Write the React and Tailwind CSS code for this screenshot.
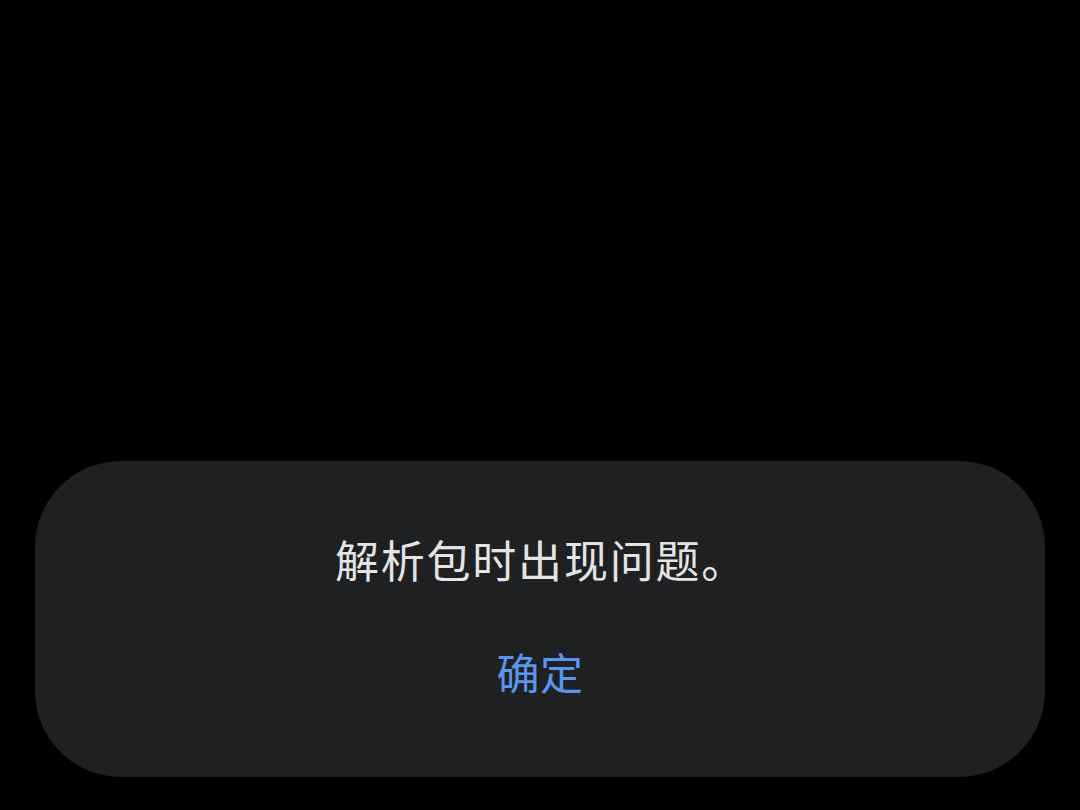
export default function App() {
  return (
    <div
      className="w-[1080px] h-[810px] bg-black flex flex-col justify-end pb-[33px] px-[35px]"
      style={{ fontFamily: '"Noto Sans CJK SC", "Noto Sans", sans-serif' }}
    >
      <div className="w-[1010px] h-[316px] bg-[#1f2022] rounded-[86px] flex flex-col items-center pt-[70px]">
        <p className="text-[44px] leading-[56px] text-[#e4e4e4] tracking-[1.8px] pl-[2px]">解析包时出现问题。</p>
        <button className="mt-[56px] text-[43px] leading-[56px] text-[#5b95ef] tracking-[0.5px]">确定</button>
      </div>
    </div>
  );
}
